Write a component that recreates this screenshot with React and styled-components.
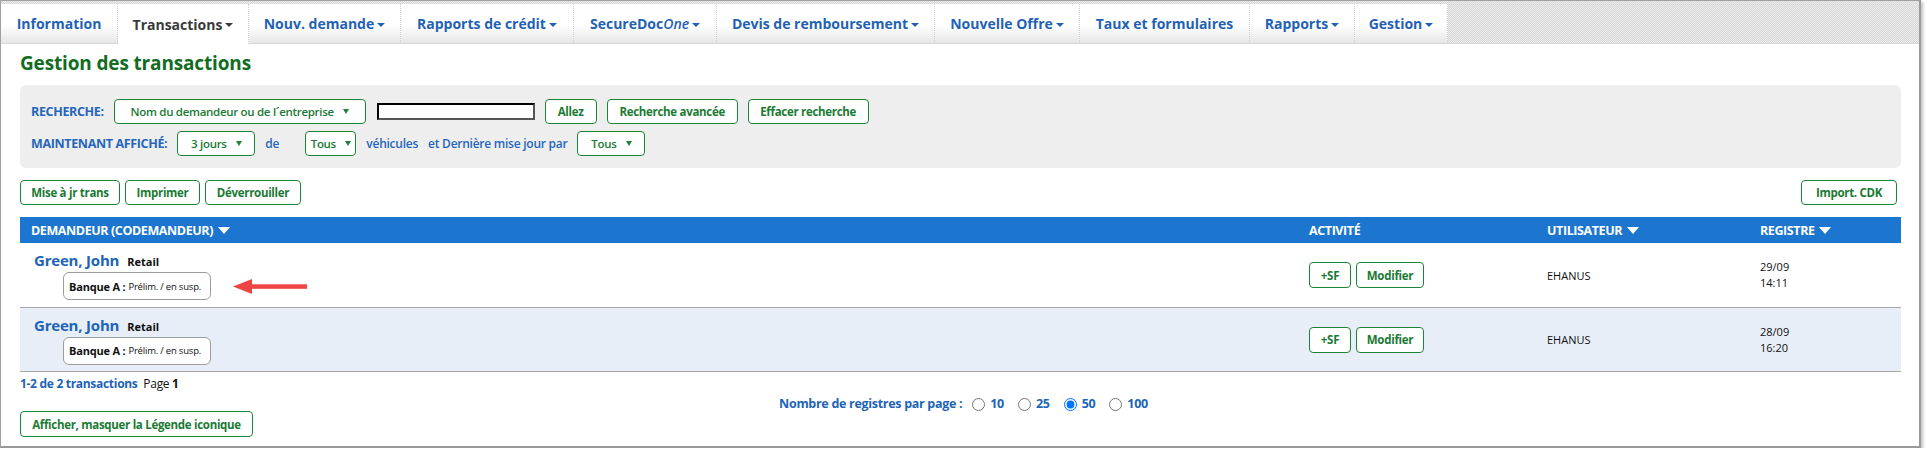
import React from 'react';
import styled, { createGlobalStyle } from 'styled-components';

const GlobalStyle = createGlobalStyle`
  body {
    margin: 0;
    background: #ffffff;
    font-family: "Open Sans", "Liberation Sans", sans-serif;
  }
`;

const BLUE = '#1f62b4';
const GREEN = '#1c8438';

const tabs = [
  { label: 'Information', width: 117 },
  { label: 'Transactions', width: 131, caret: true, active: true },
  { label: 'Nouv. demande', width: 152, caret: true },
  { label: 'Rapports de crédit', width: 173, caret: true },
  { label: 'SecureDoc', italic: 'One', width: 143, caret: true },
  { label: 'Devis de remboursement', width: 218, caret: true },
  { label: 'Nouvelle Offre', width: 145, caret: true },
  { label: 'Taux et formulaires', width: 170 },
  { label: 'Rapports', width: 105, caret: true },
  { label: 'Gestion', width: 93, caret: true },
];

const rows = [
  { name: 'Green, John', kind: 'Retail', date: '29/09', time: '14:11', arrow: true },
  { name: 'Green, John', kind: 'Retail', date: '28/09', time: '16:20', shaded: true },
];

function App() {
  return (
    <>
      <GlobalStyle />
      <Frame>
        <TabBar>
          {tabs.map(t => (
            <Tab key={t.label} $width={t.width} $active={t.active}>
              {t.label}
              {t.italic && <i>{t.italic}</i>}
              {t.caret && <Caret />}
            </Tab>
          ))}
        </TabBar>

        <Content>
          <Title>Gestion des transactions</Title>

          <SearchPanel>
            <SearchRow>
              <Label>RECHERCHE:</Label>
              <Select $width={252}>
                Nom du demandeur ou de l´entreprise <SolidCaret />
              </Select>
              <SearchInput type="text" />
              <Button $width={52}>Allez</Button>
              <Button $width={131}>Recherche avancée</Button>
              <Button $width={121}>Effacer recherche</Button>
            </SearchRow>
            <SearchRow>
              <Label>MAINTENANT AFFICHÉ:</Label>
              <Select $width={78}>3 jours <SolidCaret /></Select>
              <Label $width={30} $plain>de</Label>
              <Select $width={51}>Tous <SolidCaret /></Select>
              <Label $plain>véhicules</Label>
              <Label $plain>et Dernière mise jour par</Label>
              <Select $width={68}>Tous <SolidCaret /></Select>
            </SearchRow>
          </SearchPanel>

          <Toolbar>
            <ButtonGroup>
              <Button $width={100}>Mise à jr trans</Button>
              <Button $width={75}>Imprimer</Button>
              <Button $width={96}>Déverrouiller</Button>
            </ButtonGroup>
            <Button $width={96}>Import. CDK</Button>
          </Toolbar>

          <Table>
            <HeaderRow>
              <HeadCell>DEMANDEUR (CODEMANDEUR) <HeadCaret /></HeadCell>
              <HeadCell>ACTIVITÉ</HeadCell>
              <HeadCell>UTILISATEUR <HeadCaret /></HeadCell>
              <HeadCell>REGISTRE <HeadCaret /></HeadCell>
            </HeaderRow>
            {rows.map((r, i) => (
              <Row key={i} $shaded={r.shaded}>
                <ApplicantCell>
                  <NameLine>
                    <Name>{r.name}</Name>
                    <Kind>{r.kind}</Kind>
                  </NameLine>
                  <BadgeLine>
                    <Badge>
                      <b>Banque A :</b> Prélim. / en susp.
                    </Badge>
                    {r.arrow && (
                      <Arrow width="74" height="15" viewBox="0 0 74 15">
                        <polygon points="0,7.5 19,0 19,15" fill="#ef4444" />
                        <rect x="17" y="5.3" width="57" height="4.5" fill="#ef4444" />
                      </Arrow>
                    )}
                  </BadgeLine>
                </ApplicantCell>
                <Cell>
                  <ButtonGroup>
                    <Button $width={42} $height={26}>+SF</Button>
                    <Button $width={68} $height={26}>Modifier</Button>
                  </ButtonGroup>
                </Cell>
                <Cell>EHANUS</Cell>
                <Cell>
                  <DateText>
                    {r.date}
                    <br />
                    {r.time}
                  </DateText>
                </Cell>
              </Row>
            ))}
          </Table>

          <Summary>
            <strong>1-2 de 2 transactions</strong> <span>Page <b>1</b></span>
          </Summary>

          <PerPage>
            <PerPageLabel>Nombre de registres par page :</PerPageLabel>
            {['10', '25', '50', '100'].map(n => (
              <RadioOption key={n}>
                <input type="radio" name="pp" defaultChecked={n === '50'} />
                {n}
              </RadioOption>
            ))}
          </PerPage>

          <Button $width={233} $height={26}>Afficher, masquer la Légende iconique</Button>
        </Content>
      </Frame>
    </>
  );
}

const Frame = styled.div`
  box-sizing: border-box;
  width: 1921px;
  border: 1px solid #a0a0a0;
  border-right: 2px solid #9a9a9a;
  border-bottom: 2px solid #9a9a9a;
  box-shadow: 2px 2px 3px rgba(0, 0, 0, 0.25);
  background: #ffffff;
`;

const TabBar = styled.div`
  display: flex;
  align-items: flex-end;
  height: 42px;
  background-color: #e4e4e4;
  background-image: repeating-conic-gradient(#d6d6d6 0 25%, #ececec 0 50%);
  background-size: 2px 2px;
  border-bottom: 1px solid #d8d8d8;
`;

const Tab = styled.div`
  box-sizing: border-box;
  width: ${p => p.$width}px;
  display: flex;
  align-items: center;
  justify-content: center;
  font-size: 14px;
  font-weight: 700;
  color: ${p => (p.$active ? '#3a3a3a' : BLUE)};
  background: ${p => (p.$active ? '#ffffff' : 'linear-gradient(#ffffff 55%, #e6e6e6)')};
  border-right: 1px dotted #cfcfcf;
  margin-bottom: ${p => (p.$active ? '-1px' : '0')};
  height: ${p => (p.$active ? '40px' : '39px')};
  i {
    font-weight: 600;
  }
`;

const Caret = styled.span`
  display: inline-block;
  margin-left: 3px;
  margin-top: 2px;
  border-left: 4px solid transparent;
  border-right: 4px solid transparent;
  border-top: 4px solid currentColor;
`;

const SolidCaret = styled.span`
  display: inline-block;
  margin-left: 9px;
  border-left: 3.5px solid transparent;
  border-right: 3.5px solid transparent;
  border-top: 5px solid ${GREEN};
`;

const HeadCaret = styled.span`
  display: inline-block;
  margin-left: 2px;
  border-left: 6px solid transparent;
  border-right: 6px solid transparent;
  border-top: 7px solid #ffffff;
  vertical-align: 1px;
`;

const Content = styled.div`
  padding: 8px 18px 9px 19px;
`;

const Title = styled.h1`
  margin: 0 0 11px 0;
  font-size: 19px;
  line-height: 22px;
  font-weight: 700;
  color: #126c22;
  letter-spacing: -0.15px;
`;

const SearchPanel = styled.div`
  box-sizing: border-box;
  height: 83px;
  padding: 14px 11px 12px 11px;
  background: #eeeeee;
  border-radius: 6px;
  display: flex;
  flex-direction: column;
  gap: 7px;
`;

const SearchRow = styled.div`
  display: flex;
  align-items: center;
  gap: 10px;
  height: 25px;
`;

const Label = styled.span`
  font-size: ${p => (p.$plain ? '12px' : '12.5px')};
  font-weight: ${p => (p.$plain ? 600 : 700)};
  color: #2566bd;
  letter-spacing: ${p => (p.$plain ? '-0.25px' : '-0.35px')};
  white-space: nowrap;
  ${p => p.$width && `width: ${p.$width}px;`}
`;

const Select = styled.div`
  box-sizing: border-box;
  width: ${p => p.$width}px;
  height: 25px;
  display: flex;
  align-items: center;
  justify-content: center;
  background: #ffffff;
  border: 1px solid ${GREEN};
  border-radius: 4px;
  font-size: 11.5px;
  font-weight: 600;
  color: #1a7a33;
  letter-spacing: -0.3px;
  white-space: nowrap;
`;

const SearchInput = styled.input`
  box-sizing: border-box;
  width: 158px;
  height: 17px;
  margin: 0 0 0 1px;
  padding: 0;
  border: 2px inset #555555;
  background: #ffffff;
`;

const Button = styled.button`
  box-sizing: border-box;
  width: ${p => p.$width}px;
  height: ${p => p.$height || 25}px;
  padding: 0;
  background: #ffffff;
  border: 1px solid ${GREEN};
  border-radius: 4px;
  font-family: "Open Sans", "Liberation Sans", sans-serif;
  font-size: 11.5px;
  font-weight: 700;
  color: #1a7a33;
  letter-spacing: -0.3px;
  white-space: nowrap;
  cursor: pointer;
`;

const Toolbar = styled.div`
  display: flex;
  justify-content: space-between;
  margin: 12px 4px 0 0;
`;

const ButtonGroup = styled.div`
  display: flex;
  gap: 5px;
`;

const Table = styled.div`
  margin-top: 12px;
`;

const grid = `
  display: grid;
  grid-template-columns: 1278px 238px 213px 1fr;
`;

const HeaderRow = styled.div`
  ${grid}
  height: 26px;
  align-items: center;
  background: #1c76cf;
`;

const HeadCell = styled.div`
  padding-left: 11px;
  font-size: 12.5px;
  font-weight: 700;
  color: #ffffff;
  letter-spacing: -0.4px;
  white-space: nowrap;
`;

const Row = styled.div`
  ${grid}
  height: ${p => (p.$shaded ? 63 : 64)}px;
  align-items: center;
  background: ${p => (p.$shaded ? '#e7eef7' : '#ffffff')};
  border-bottom: 1px solid #a9a9a9;
`;

const Cell = styled.div`
  padding-left: 11px;
  font-size: 11px;
  color: #111111;
`;

const ApplicantCell = styled.div`
  padding-left: 14px;
  display: flex;
  flex-direction: column;
  gap: 2px;
`;

const NameLine = styled.div`
  display: flex;
  align-items: baseline;
  gap: 8px;
`;

const Name = styled.span`
  font-size: 15px;
  font-weight: 700;
  color: #2064b8;
  letter-spacing: -0.2px;
`;

const Kind = styled.span`
  font-size: 11px;
  font-weight: 700;
  color: #111111;
`;

const BadgeLine = styled.div`
  display: flex;
  align-items: center;
  padding-left: 29px;
`;

const Badge = styled.div`
  box-sizing: border-box;
  width: 148px;
  height: 28px;
  display: flex;
  align-items: center;
  padding-left: 5px;
  background: #ffffff;
  border: 1px solid #9c9c9c;
  border-radius: 6px;
  font-size: 9.5px;
  color: #111111;
  white-space: nowrap;
  letter-spacing: -0.2px;
  b {
    font-size: 11px;
    margin-right: 3px;
  }
`;

const Arrow = styled.svg`
  margin-left: 22px;
  flex-shrink: 0;
`;

const DateText = styled.div`
  line-height: 16px;
`;

const Summary = styled.div`
  margin-top: 4px;
  height: 16px;
  line-height: 16px;
  font-size: 12px;
  letter-spacing: -0.3px;
  strong {
    color: #2064b8;
  }
  span {
    color: #111111;
    margin-left: 3px;
  }
`;

const PerPage = styled.div`
  display: flex;
  align-items: center;
  justify-content: center;
  margin-top: 3px;
  height: 16px;
  padding-left: 16px;
  font-size: 12.5px;
  font-weight: 700;
  color: #2064b8;
  letter-spacing: -0.3px;
`;

const PerPageLabel = styled.span`
  margin-right: 6px;
`;

const RadioOption = styled.label`
  display: flex;
  align-items: center;
  margin-right: 10px;
  input {
    width: 13px;
    height: 13px;
    margin: 3px 5px 0 4px;
  }
`;

export default App;
